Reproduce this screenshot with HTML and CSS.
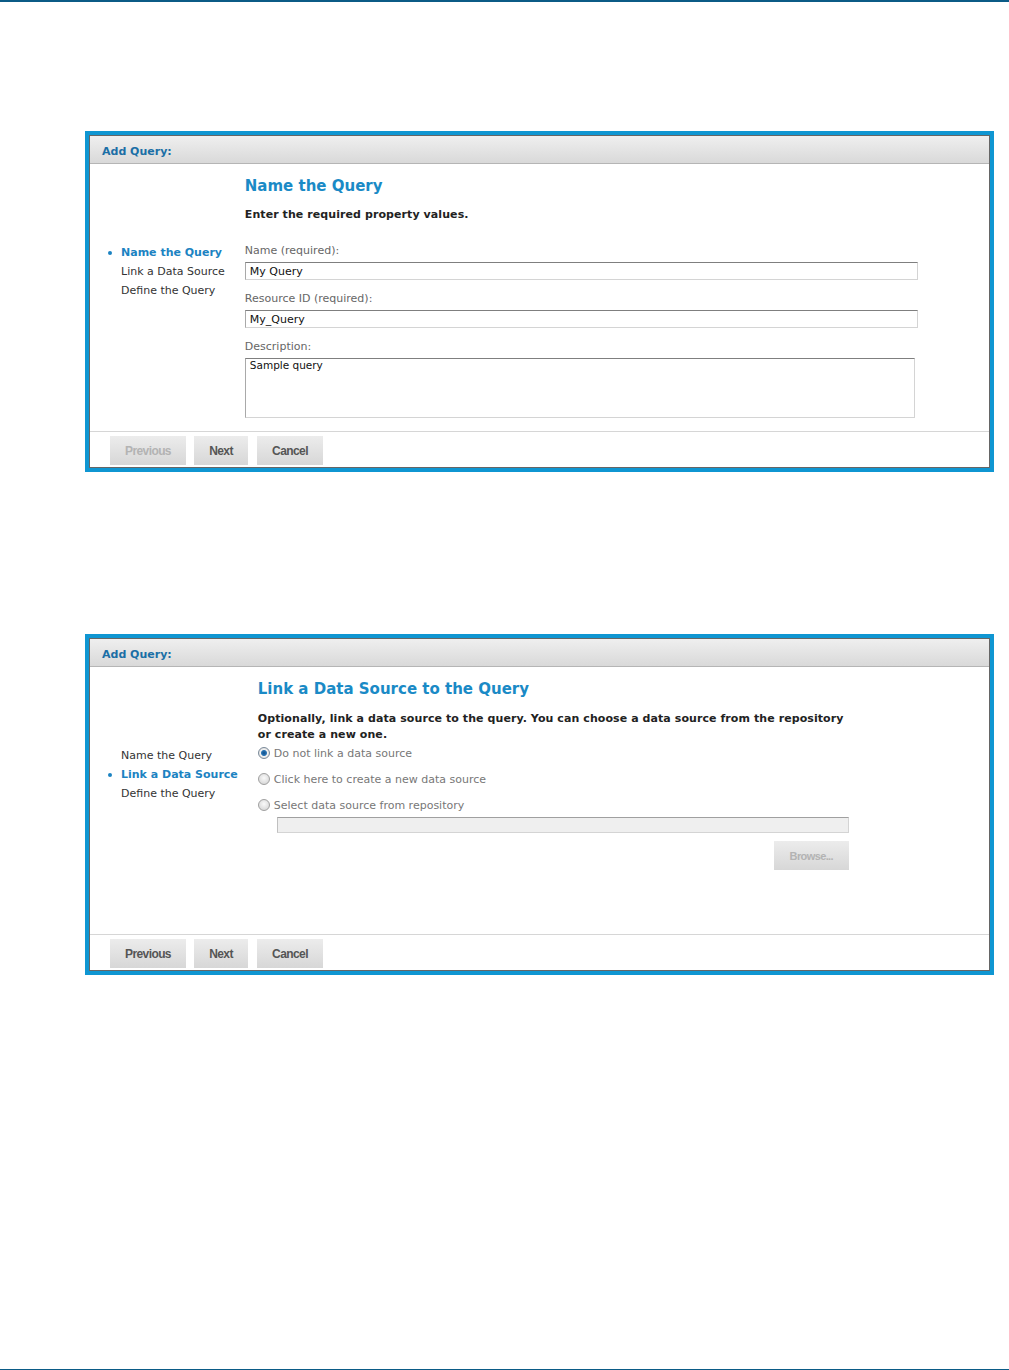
FILE: index.html
```html
<!DOCTYPE html>
<html lang="en">
  <head>
    <meta charset="UTF-8" />
    <title>Add Query</title>
    <link rel="stylesheet" href="styles.css">
  </head>
  <body>
    <div class="page-rule"></div>

    <div class="page">
      <!-- step 1 -->
      <div class="dialog dialog-first">
        <div class="dialog-frame">
          <div class="dialog-header">Add Query:</div>
          <div class="dialog-body">
            <ul class="steps">
              <li class="active">Name the Query</li>
              <li>Link a Data Source</li>
              <li>Define the Query</li>
            </ul>
            <div class="step-content wide">
              <h2 class="step-title">Name the Query</h2>
              <p class="step-intro">Enter the required property values.</p>
              <label class="field-label">Name (required):</label>
              <div class="text-input">My Query</div>
              <label class="field-label">Resource ID (required):</label>
              <div class="text-input">My_Query</div>
              <label class="field-label">Description:</label>
              <div class="text-area">Sample query</div>
            </div>
          </div>
          <div class="dialog-footer">
            <button class="btn btn-prev" disabled>Previous</button>
            <button class="btn btn-next">Next</button>
            <button class="btn btn-cancel">Cancel</button>
          </div>
        </div>
      </div>

      <!-- step 2 -->
      <div class="dialog">
        <div class="dialog-frame">
          <div class="dialog-header">Add Query:</div>
          <div class="dialog-body">
            <ul class="steps">
              <li>Name the Query</li>
              <li class="active">Link a Data Source</li>
              <li>Define the Query</li>
            </ul>
            <div class="step-content narrow">
              <h2 class="step-title">Link a Data Source to the Query</h2>
              <p class="step-intro">Optionally, link a data source to the query. You can choose a data source from the repository or create a new one.</p>
              <div class="radio-row"><span class="radio checked"></span>Do not link a data source</div>
              <div class="radio-row"><span class="radio"></span>Click here to create a new data source</div>
              <div class="radio-row"><span class="radio"></span>Select data source from repository</div>
              <div class="repo-input"></div>
              <div class="browse-row">
                <button class="btn btn-browse" disabled>Browse...</button>
              </div>
            </div>
          </div>
          <div class="dialog-footer">
            <button class="btn btn-prev">Previous</button>
            <button class="btn btn-next">Next</button>
            <button class="btn btn-cancel">Cancel</button>
          </div>
        </div>
      </div>
    </div>

    <div class="page-rule bottom"></div>
  </body>
</html>
```

FILE: styles.css
```css
body {
  margin: 0;
  font-family: "DejaVu Sans", Verdana, sans-serif;
  font-size: 11px;
  color: #333;
  background: #fff;
}

.page-rule {
  height: 2px;
  background-color: #0b5b86;
}

.page-rule.bottom {
  margin-top: 394px;
}

.page {
  padding: 129px 15px 0 85px;
}

.dialog {
  width: 909px;
  border: 4px solid #0f96d2;
  box-sizing: border-box;
}

.dialog-first {
  margin-bottom: 162px;
}

.dialog-frame {
  border: 1px solid #666;
  background: #fff;
}

.dialog-header {
  height: 27px;
  line-height: 31px;
  padding-left: 12px;
  font-weight: bold;
  color: #1b6fa6;
  background: linear-gradient(#efefef, #d9d9d9);
  border-bottom: 1px solid #b5b5b5;
}

.dialog-body {
  display: flex;
  height: 267px;
}

.steps {
  list-style: none;
  margin: 0;
  padding: 79px 20px 0 31px;
}

.steps li {
  position: relative;
  line-height: 19px;
  white-space: nowrap;
}

.steps li.active {
  font-weight: bold;
  color: #1c83c2;
}

.steps li.active::before {
  content: "";
  position: absolute;
  left: -13px;
  top: 8px;
  width: 4px;
  height: 4px;
  border-radius: 50%;
  background-color: #1c83c2;
}

.step-content {
  padding-top: 12px;
}

.step-content.wide {
  width: 673px;
}

.step-content.narrow {
  width: 591px;
}

.step-title {
  margin: 0;
  font-size: 15px;
  line-height: 20px;
  font-weight: bold;
  color: #1a8ac6;
}

.step-intro {
  margin: 11px 0 0;
  font-weight: bold;
  line-height: 16px;
  letter-spacing: 0.08px;
  color: #222;
}

.narrow .step-intro {
  margin-top: 12px;
}

.field-label {
  display: block;
  margin-top: 19px;
  padding-top: 1px;
  line-height: 16px;
  color: #666;
}

.text-input + .field-label,
.text-area + .field-label {
  margin-top: 10px;
}

.text-input,
.text-area,
.repo-input {
  box-sizing: border-box;
  margin-top: 3px;
  padding: 0 4px;
  border: 1px solid #d4d4d4;
  border-top-color: #7f7f7f;
  border-left-color: #a9a9a9;
  color: #111;
  background: #fff;
}

.text-input {
  height: 18px;
  line-height: 17px;
}

.text-area {
  width: 670px;
  height: 60px;
  line-height: 12px;
  font-size: 10.5px;
}

.radio-row {
  display: flex;
  align-items: center;
  height: 16px;
  margin-top: 2px;
  color: #777;
}

.radio-row + .radio-row {
  margin-top: 10px;
}

.radio {
  box-sizing: border-box;
  width: 12px;
  height: 12px;
  margin-right: 4px;
  border-radius: 50%;
  border: 1px solid #a0a0a0;
  background: radial-gradient(circle at 50% 40%, #fafafa, #cfcfcf);
}

.radio.checked {
  border-color: #7a8a99;
  background: radial-gradient(circle, #0d4f8a 0, #2a74b4 2.5px, #f2f2f2 3.5px, #d6d6d6 6px);
}

.repo-input {
  height: 16px;
  margin: 4px 0 0 19px;
  width: 572px;
  background-color: #efefef;
  border-top-color: #a0a0a0;
  border-left-color: #c0c0c0;
}

.browse-row {
  display: flex;
  justify-content: flex-end;
  margin-top: 8px;
}

.dialog-footer {
  display: flex;
  gap: 8px;
  padding: 4px 0 2px 20px;
  border-top: 1px solid #d6d6d6;
}

.btn {
  height: 29px;
  padding: 0;
  border: none;
  border-radius: 0;
  font-family: "Liberation Sans", Arial, sans-serif;
  font-size: 12px;
  font-weight: bold;
  letter-spacing: -0.6px;
  color: #555;
  background: linear-gradient(#ececec, #d7d7d7);
  cursor: pointer;
}

.btn:disabled {
  color: #b3b3b3;
  cursor: default;
}

.btn-prev {
  width: 76px;
}

.btn-next {
  width: 54px;
}

.btn-cancel {
  width: 66px;
  margin-left: 1px;
}

.btn-browse {
  width: 75px;
  font-size: 11px;
}
```
